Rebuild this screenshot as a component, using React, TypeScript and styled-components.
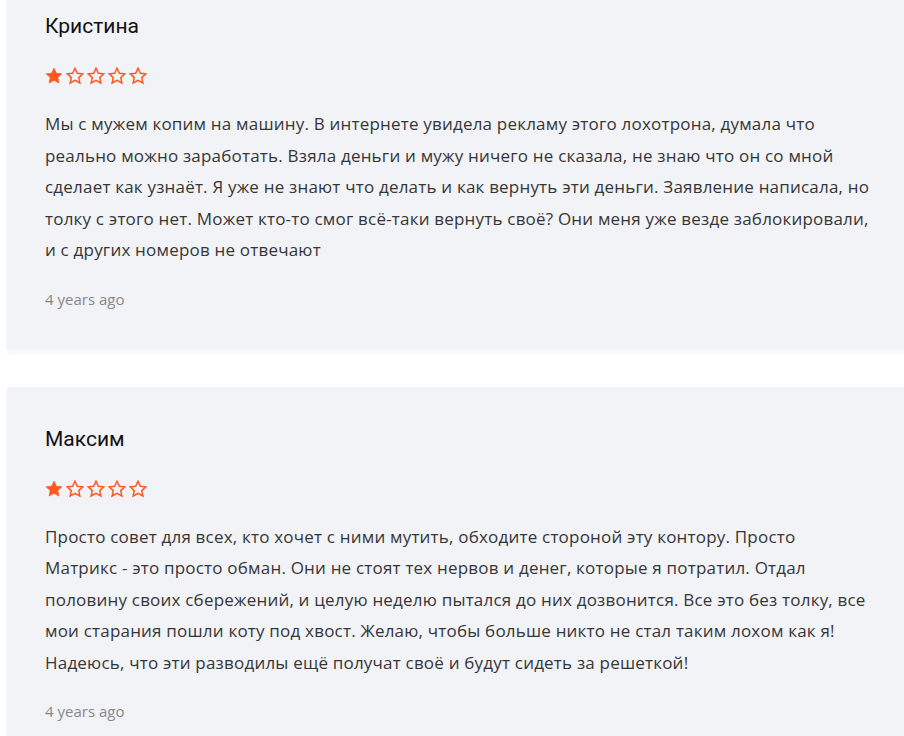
import * as React from "react";
import styled, { createGlobalStyle } from "styled-components";

interface Review {
  author: string;
  rating: number;
  text: string;
  date: string;
}

const reviews: Review[] = [
  {
    author: "Кристина",
    rating: 1,
    text:
      "Мы с мужем копим на машину. В интернете увидела рекламу этого лохотрона, думала что реально можно заработать. Взяла деньги и мужу ничего не сказала, не знаю что он со мной сделает как узнаёт. Я уже не знают что делать и как вернуть эти деньги. Заявление написала, но толку с этого нет. Может кто-то смог всё-таки вернуть своё? Они меня уже везде заблокировали, и с других номеров не отвечают",
    date: "4 years ago",
  },
  {
    author: "Максим",
    rating: 1,
    text:
      "Просто совет для всех, кто хочет с ними мутить, обходите стороной эту контору. Просто Матрикс - это просто обман. Они не стоят тех нервов и денег, которые я потратил. Отдал половину своих сбережений, и целую неделю пытался до них дозвонится. Все это без толку, все мои старания пошли коту под хвост. Желаю, чтобы больше никто не стал таким лохом как я! Надеюсь, что эти разводилы ещё получат своё и будут сидеть за решеткой!",
    date: "4 years ago",
  },
];

const GlobalStyle = createGlobalStyle`
  html, body {
    margin: 0;
    padding: 0;
    background: #fff;
    overflow: hidden;
  }
`;

const ReviewList = styled.div`
  display: flex;
  flex-direction: column;
  gap: 37px;
  margin-top: -26px;
  padding-left: 7px;
  width: 940px;
`;

const Card = styled.div`
  background: #f2f3f7;
  padding: 40px 38px 41px;
  box-shadow: 0 3px 6px rgba(0, 0, 0, 0.04);
`;

const Author = styled.h4`
  margin: 0;
  font-family: Roboto, "Liberation Sans", Arial, sans-serif;
  font-weight: 400;
  font-size: 21px;
  line-height: 24px;
  color: #111;
`;

const Stars = styled.div`
  display: flex;
  gap: 3px;
  margin-top: 29px;
  height: 18px;
`;

const Body = styled.p`
  margin: 23px 0 0;
  width: 825.5px;
  font-family: "Open Sans", "Liberation Sans", sans-serif;
  font-size: 17px;
  letter-spacing: 0.2px;
  line-height: 31.5px;
  color: #363636;
`;

const Date = styled.div`
  margin-top: 23px;
  font-family: "Open Sans", "Liberation Sans", sans-serif;
  font-size: 15px;
  line-height: 20px;
  color: #888;
`;

const STAR =
  "M9 1.2l2.35 5.05 5.45.62-4.05 3.72 1.1 5.39L9 13.25l-4.85 2.73 1.1-5.39L1.2 6.87l5.45-.62z";

const Star = ({ filled }: { filled: boolean }) => (
  <svg width="18" height="18" viewBox="0 0 18 18">
    <path
      d={STAR}
      fill={filled ? "#ff5722" : "none"}
      stroke="#ff5722"
      strokeWidth={filled ? 0.8 : 1.5}
      strokeLinejoin="miter"
    />
  </svg>
);

const ReviewCard = ({ review }: { review: Review }) => (
  <Card>
    <Author>{review.author}</Author>
    <Stars>
      {[1, 2, 3, 4, 5].map((i) => (
        <Star key={i} filled={i <= review.rating} />
      ))}
    </Stars>
    <Body>{review.text}</Body>
    <Date>{review.date}</Date>
  </Card>
);

const App = () => (
  <>
    <GlobalStyle />
    <ReviewList>
      {reviews.map((r) => (
        <ReviewCard key={r.author} review={r} />
      ))}
    </ReviewList>
  </>
);

export default App;
